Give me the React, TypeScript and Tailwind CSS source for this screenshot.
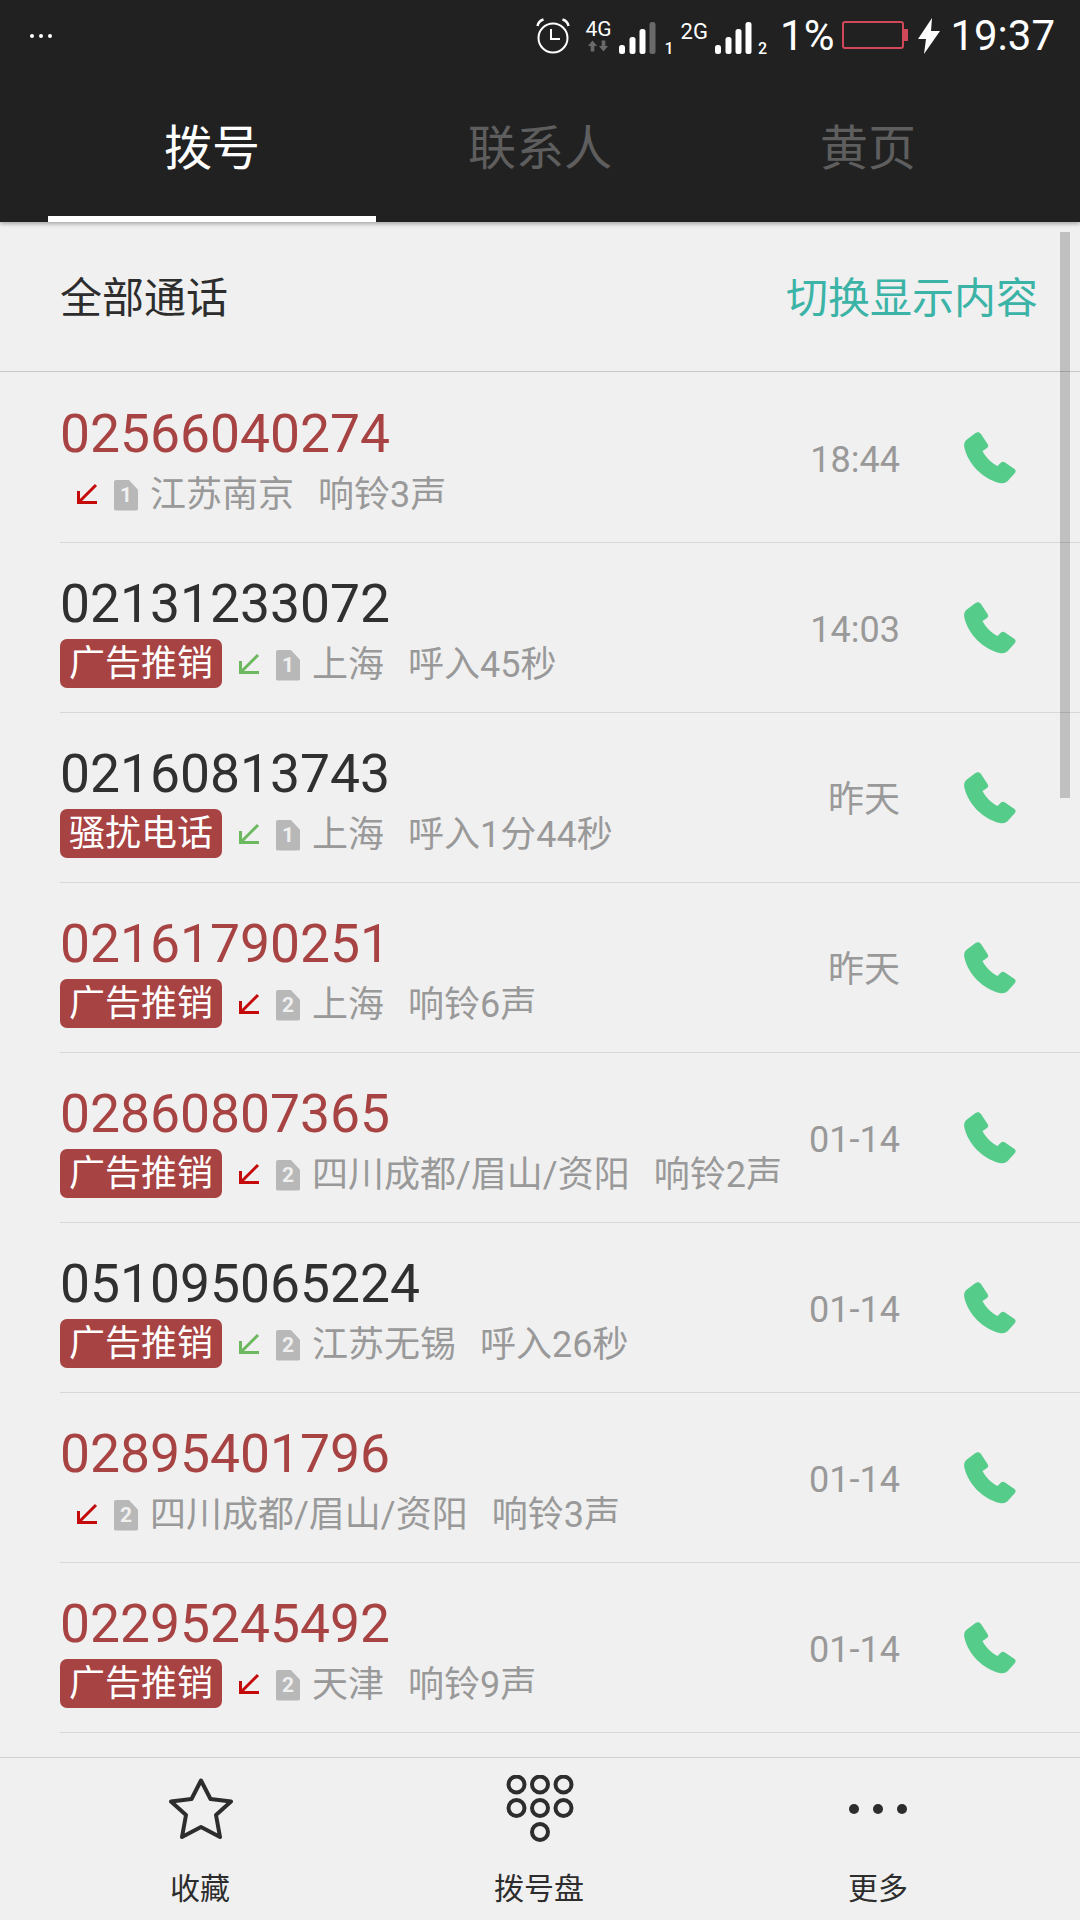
const FONT = "font-['Roboto','Noto_Sans_CJK_SC',sans-serif]"

interface CallItem {
  number: string
  missed: boolean
  tag?: string
  sim: number
  place: string
  detail: string
  time: string
}

const calls: CallItem[] = [
  { number: "02566040274", missed: true, sim: 1, place: "江苏南京", detail: "响铃3声", time: "18:44" },
  { number: "02131233072", missed: false, tag: "广告推销", sim: 1, place: "上海", detail: "呼入45秒", time: "14:03" },
  { number: "02160813743", missed: false, tag: "骚扰电话", sim: 1, place: "上海", detail: "呼入1分44秒", time: "昨天" },
  { number: "02161790251", missed: true, tag: "广告推销", sim: 2, place: "上海", detail: "响铃6声", time: "昨天" },
  { number: "02860807365", missed: true, tag: "广告推销", sim: 2, place: "四川成都/眉山/资阳", detail: "响铃2声", time: "01-14" },
  { number: "051095065224", missed: false, tag: "广告推销", sim: 2, place: "江苏无锡", detail: "呼入26秒", time: "01-14" },
  { number: "02895401796", missed: true, sim: 2, place: "四川成都/眉山/资阳", detail: "响铃3声", time: "01-14" },
  { number: "02295245492", missed: true, tag: "广告推销", sim: 2, place: "天津", detail: "响铃9声", time: "01-14" },
]

function Signal({ dimLast }: { dimLast?: boolean }) {
  return (
    <svg width="37" height="32" viewBox="0 0 37 32" className="shrink-0">
      <rect x="0" y="23" width="6" height="9" rx="2.500" fill="#fff" />
      <rect x="10.500" y="15" width="6" height="17" rx="2.500" fill="#fff" />
      <rect x="20.500" y="7" width="6" height="25" rx="2.500" fill="#fff" />
      <rect x="30.500" y="0" width="6" height="32" rx="2.500" fill={dimLast ? "#6a6a6a" : "#fff"} />
    </svg>
  )
}

function StatusBar() {
  return (
    <div className="flex h-[72px] items-center justify-between pl-[30px] pr-[25px]">
      <div className="flex gap-[5px] self-start pt-[34px]">
        <span className="h-[4px] w-[4px] rounded-full bg-white" />
        <span className="h-[4px] w-[4px] rounded-full bg-white" />
        <span className="h-[4px] w-[4px] rounded-full bg-white" />
      </div>
      <div className="flex items-center text-white">
        <svg width="34" height="36" viewBox="0 0 34 36" className="shrink-0" fill="none" stroke="#fff" strokeWidth="2">
          <circle cx="17" cy="20" r="14.500" />
          <path d="M15 11v10h9" />
          <path d="M1.500 8q1-5 6-6.500M32.500 8q-1-5-6-6.500" strokeWidth="2.500" />
        </svg>
        <div className="ml-[14px] flex w-[28px] flex-col items-center">
          <span className="text-[21px] leading-[19px]">4G</span>
          <svg width="22" height="12" viewBox="0 0 24 12" className="mt-[1px]">
            <path d="M6 0l5 6H8v6H4V6H1zM18 12l-5-6h3V0h4v6h3z" fill="#6a6a6a" />
          </svg>
        </div>
        <div className="ml-[7px] mt-[3px]"><Signal dimLast /></div>
        <span className="ml-[8px] mt-[25px] text-[16px] leading-[14px] font-medium">1</span>
        <span className="ml-[7px] mb-[9px] text-[22px] leading-[20px]">2G</span>
        <div className="ml-[7px] mt-[3px]"><Signal /></div>
        <span className="ml-[6px] mt-[25px] text-[16px] leading-[14px] font-medium">2</span>
        <span className="ml-[13px] text-[42px] leading-[50px]">1%</span>
        <svg width="66" height="28" viewBox="0 0 66 28" className="ml-[8px] mb-[2px] shrink-0">
          <rect x="1" y="1" width="60" height="26" rx="2" fill="none" stroke="#d0485a" strokeWidth="2" />
          <rect x="61" y="8" width="5" height="12" fill="#d0485a" />
        </svg>
        <svg width="22" height="36" viewBox="0 0 22 36" className="ml-[10px] shrink-0">
          <path d="M14 0L0 21h8l-2 15L22 13h-9z" fill="#fff" />
        </svg>
        <span className="ml-[10px] text-[42px] leading-[50px]">19:37</span>
      </div>
    </div>
  )
}

function Tabs() {
  const tabs = ["拨号", "联系人", "黄页"]
  return (
    <div className="flex h-[150px] px-[48px]">
      {tabs.map((tab, i) => (
        <div
          key={tab}
          className={
            i === 0
              ? "flex w-[328px] items-center justify-center border-b-[6px] border-white pt-[10px] text-[48px] text-white"
              : "flex w-[328px] items-center justify-center border-b-[6px] border-transparent pt-[10px] text-[48px] text-[#5e5e5e]"
          }
        >
          {tab}
        </div>
      ))}
    </div>
  )
}

function ArrowIcon({ missed }: { missed: boolean }) {
  const color = missed ? "#c40a0a" : "#6cb85e"
  return (
    <svg width="22" height="22" viewBox="0 0 22 22" className="ml-[16px] mb-[2px] shrink-0" fill="none" stroke={color} strokeWidth="3">
      <path d="M20 2L3 19M2.500 8v11.500H21" />
    </svg>
  )
}

function SimIcon({ sim }: { sim: number }) {
  return (
    <div className="ml-[16px] flex h-[31px] w-[24px] shrink-0 items-center justify-center rounded-[2px] bg-[#b8b8b8] [clip-path:polygon(0_0,60%_0,100%_33%,100%_100%,0_100%)]">
      <span className="text-[21px] font-bold leading-none text-[#f0f0f0]">{sim}</span>
    </div>
  )
}

function PhoneIcon() {
  return (
    <svg width="55" height="54" viewBox="0 0 54 54" className="shrink-0">
      <path
        d="M12 1C14-.5 16 0 17.500 2L24 12C25 13.500 25 15 23.500 16L19 19C22 25 28 31 34 34L37 31C38.500 29.500 40 29.500 41.500 30.500L51 37C52.500 38 52.500 40 51 41.500L46 47C43 51 40 52 36 51C20 47 5 33 1 16C0 12 1 9 4 7Z"
        fill="#55cc8a"
      />
    </svg>
  )
}

function CallRow({ call }: { call: CallItem }) {
  return (
    <div className="ml-[60px] flex h-[170px] items-center border-b-[1.5px] border-[#d8d8d8]">
      <div className="flex min-w-0 flex-1 flex-col pt-[30px] pb-[22px]">
        <div className={call.missed ? "text-[53.4px] leading-[60px] text-[#a84343]" : "text-[53.4px] leading-[60px] text-[#303030]"}>
          {call.number}
        </div>
        <div className="mt-[7px] flex h-[49px] items-center">
          {call.tag && (
            <span className="mb-[3px] flex h-[49px] w-[162px] items-center justify-center rounded-[7px] bg-[#a84343] text-[36px] text-white">
              {call.tag}
            </span>
          )}
          <ArrowIcon missed={call.missed} />
          <SimIcon sim={call.sim} />
          <span className="ml-[12px] text-[36px] leading-[49px] text-[#999999]">{call.place}</span>
          <span className="ml-[24px] text-[36px] leading-[49px] text-[#999999]">{call.detail}</span>
        </div>
      </div>
      <span className="mt-[5px] text-right text-[36px] text-[#999999]">{call.time}</span>
      <div className="ml-[63px] mr-[62px] mt-[2px]"><PhoneIcon /></div>
    </div>
  )
}

function BottomNav() {
  return (
    <div className="flex h-[163px] shrink-0 border-t-[1.5px] border-[#d0d0d0] bg-[#f0f0f0] px-[30px]">
      <div className="flex w-[340px] flex-col items-center">
        <svg width="70" height="70" viewBox="0 0 70 70" className="ml-[2px] mt-[17px]" fill="none" stroke="#2d2d2d" strokeWidth="4" strokeLinejoin="round">
          <path d="M35 5.500L44.500 24L65 26.500L50 40L54 62L35 52L16 62L20 40L5 26.500L25.500 24Z" />
        </svg>
        <span className="mt-[22px] text-[30px] leading-[44px] text-[#2d2d2d]">收藏</span>
      </div>
      <div className="flex w-[340px] flex-col items-center">
        <svg width="68" height="68" viewBox="0 0 68 68" className="mt-[17px]" fill="none" stroke="#2d2d2d" strokeWidth="4">
          <circle cx="10.500" cy="9.500" r="8" />
          <circle cx="34" cy="9.500" r="8" />
          <circle cx="57.500" cy="9.500" r="8" />
          <circle cx="10.500" cy="33" r="8" />
          <circle cx="34" cy="33" r="8" />
          <circle cx="57.500" cy="33" r="8" />
          <circle cx="34" cy="57" r="8" />
        </svg>
        <span className="mt-[24px] mr-[2px] text-[30px] leading-[44px] text-[#2d2d2d]">拨号盘</span>
      </div>
      <div className="flex w-[336px] flex-col items-center">
        <div className="mt-[46px] mb-[53px] flex h-[10px] items-center gap-[14px]">
          <span className="h-[10px] w-[10px] rounded-full bg-[#2d2d2d]" />
          <span className="h-[10px] w-[10px] rounded-full bg-[#2d2d2d]" />
          <span className="h-[10px] w-[10px] rounded-full bg-[#2d2d2d]" />
        </div>
        <span className="text-[30px] leading-[44px] text-[#2d2d2d]">更多</span>
      </div>
    </div>
  )
}

export default function App() {
  return (
    <div className={`${FONT} flex h-[1920px] w-[1080px] flex-col overflow-hidden bg-[#f0f0f0]`}>
      <div className="relative z-10 shrink-0 bg-[#212121] shadow-[0_2px_4px_rgba(0,0,0,0.3)]">
        <StatusBar />
        <Tabs />
      </div>
      <div className="relative min-h-0 flex-1 overflow-hidden">
        <div className="flex h-[150px] items-center justify-between border-b-[1.5px] border-[#c8c8c8] pl-[60px] pr-[42px] pt-[4px]">
          <span className="text-[42px] text-[#2d2d2d]">全部通话</span>
          <span className="text-[42px] text-[#3bb3a6]">切换显示内容</span>
        </div>
        <div className="pt-[1px]">
          {calls.map((call) => (
            <CallRow key={call.number} call={call} />
          ))}
        </div>
        {/* scrollbar */}
        <div className="absolute right-[10px] top-[10px] h-[566px] w-[10px] bg-black/20" />
      </div>
      <BottomNav />
    </div>
  )
}
